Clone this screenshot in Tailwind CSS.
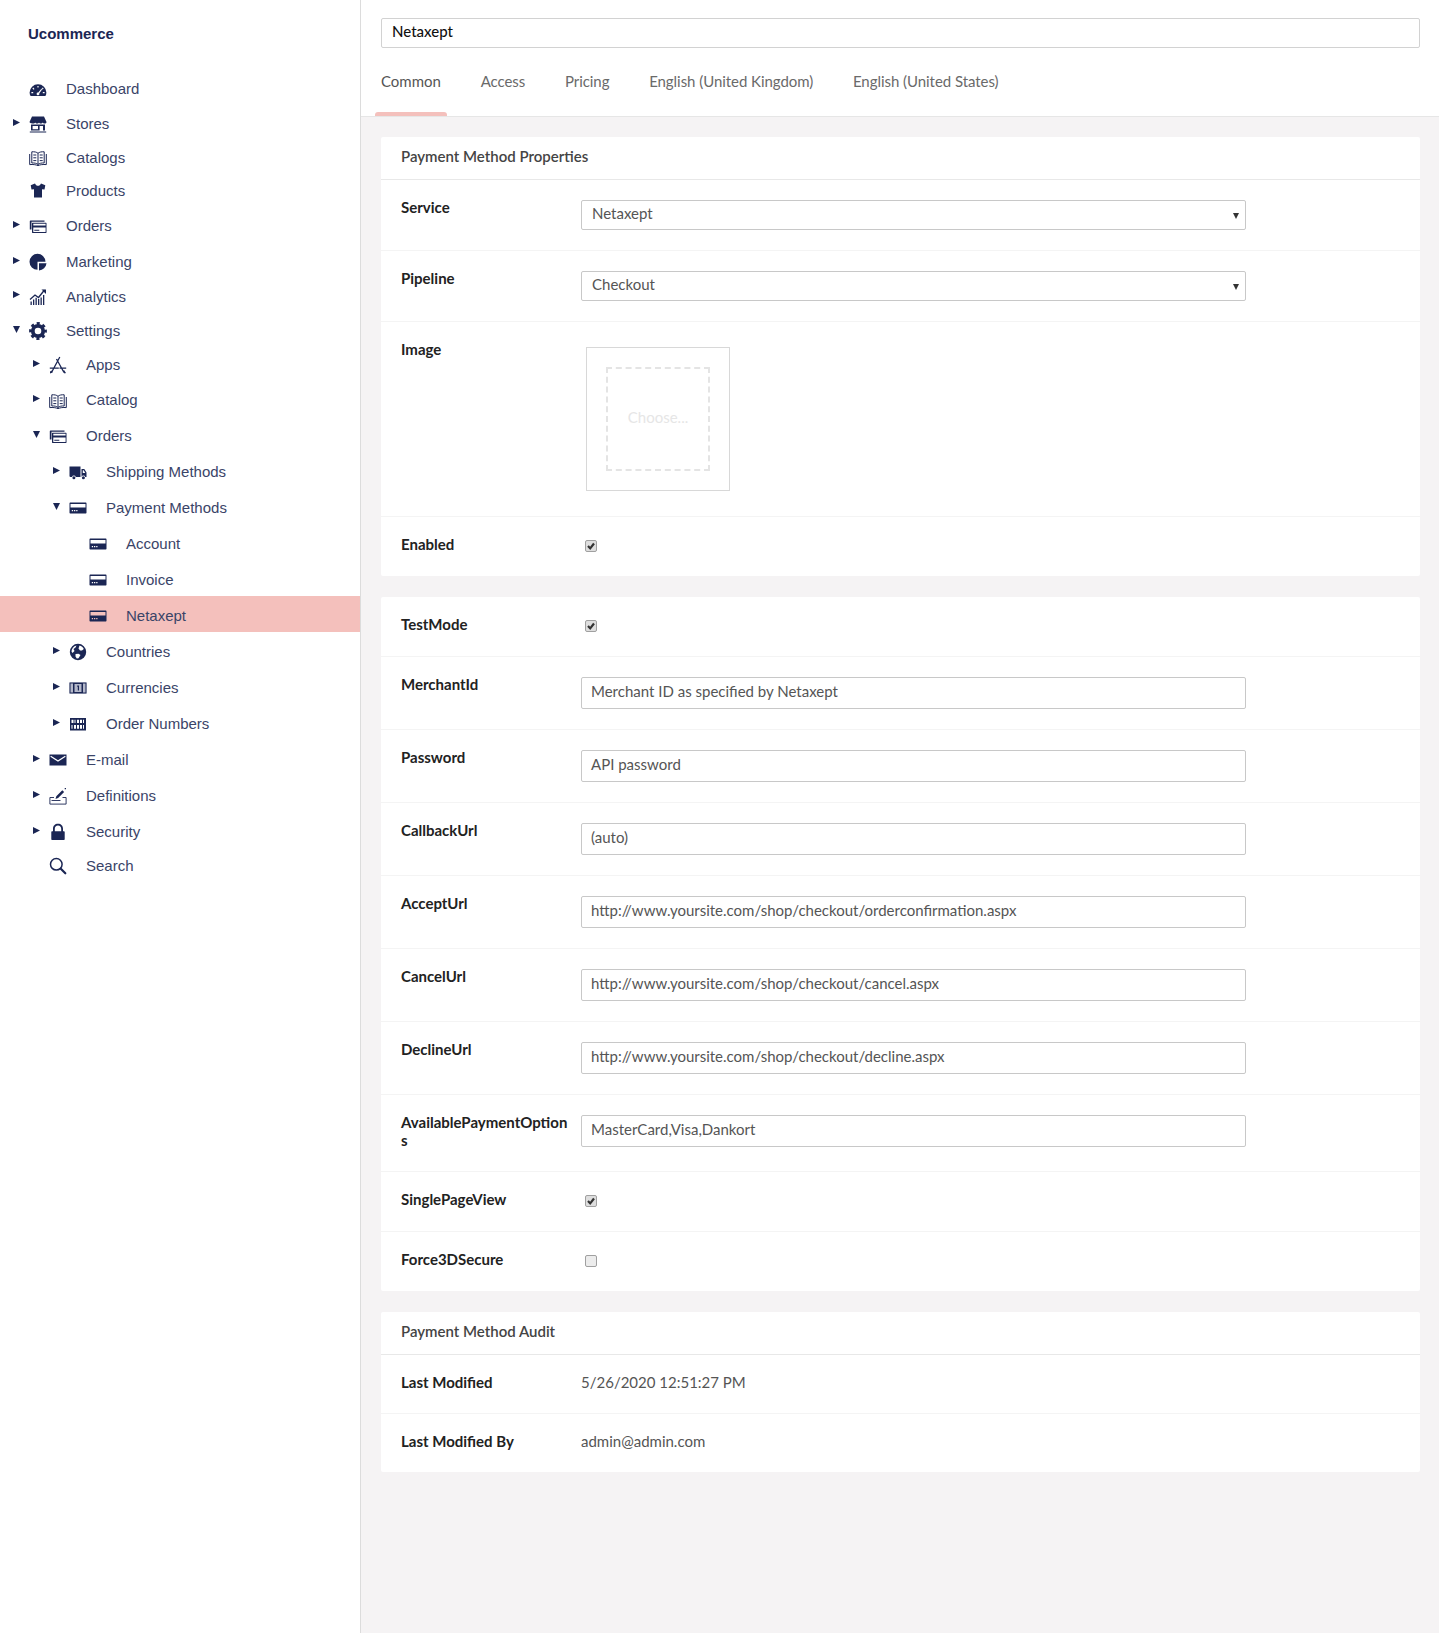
<!DOCTYPE html>
<html lang="en">
<head>
<meta charset="utf-8">
<title>Ucommerce</title>
<script src="https://cdn.jsdelivr.net/npm/@tailwindcss/browser@4"></script>
</head>
<body class="bg-white">
<div class="flex min-h-[1633px] w-[1439px]">
  <!-- Sidebar -->
  <aside class="w-[361px] shrink-0 border-r border-[#dcdcdc] bg-white font-['Liberation_Sans',Arial,sans-serif] text-[15px] text-[#3a4468]">
    <div class="flex h-[68px] items-center pl-[28px] font-bold text-[#1b2654]">Ucommerce</div>
    <nav class="mt-[2px]">
      <a class="flex h-[35px] items-center pl-[29px] pt-[4px]"><svg class="mr-[19px] h-[18px] w-[18px] text-[#1b2654]" viewBox="0 0 18 18"><path fill="currentColor" fill-rule="evenodd" d="M9 3.200a8.400 8.400 0 0 0-8.400 8.400c0 1.400.4 2.500 1 3.400h14.800c.6-.9 1-2 1-3.400A8.400 8.400 0 0 0 9 3.200zM8.400 5h1.200v1.600H8.400zM4.200 6.600l1.300 1.300-.8.8-1.300-1.300zm9.600 0 .8.8-1.300 1.300-.8-.8zM2.400 11h1.800v1.200H2.400zm11.400 0h1.800v1.200h-1.800zm-1.200-3.600.9.7-3.200 4.200a1.400 1.400 0 1 1-1-.8z"/></svg>Dashboard</a>
      <a class="flex h-[34px] items-center pl-[13px] pt-[4px]"><svg class="mr-[9px] h-[7px] w-[7px] -translate-y-[2px] text-[#1b2654]" viewBox="0 0 7 7"><path fill="currentColor" d="M0 0l7 3.500L0 7z"/></svg><svg class="mr-[19px] h-[18px] w-[18px] text-[#1b2654]" viewBox="0 0 18 18"><path fill="currentColor" fill-rule="evenodd" d="M3 1.500h12l2.500 5.500c0 1-1 1.600-1.900 1.600s-1.600-.5-1.900-1.100c-.3.6-1 1.100-1.900 1.100s-1.500-.5-1.800-1.100c-.3.6-1 1.100-1.900 1.100s-1.600-.5-1.900-1.100c-.3.6-1 1.100-1.900 1.100S.5 8 .5 7zM2 9.600h14v6H2zM3.600 11v3.200h5.400V11zm7 0v4.600H14V11zM.8 16.600h16.400v1H.8z"/></svg>Stores</a>
      <a class="flex h-[34px] items-center pl-[29px] pt-[4px]"><svg class="mr-[19px] h-[18px] w-[18px] text-[#1b2654]" viewBox="0 0 18 18"><path fill="none" stroke="currentColor" d="M9 4.300C7.600 3 5.400 2.600 2.800 2.800V14c2.600-.2 4.800.2 6.200 1.500 1.400-1.300 3.600-1.700 6.200-1.500V2.800c-2.600-.2-4.800.2-6.200 1.500zm0 0v11.200M.7 5v10.600c3.300-.3 6 0 8.300 1 2.300-1 5-1.300 8.300-1V5M4.300 6h3M4.300 8.800h3M4.300 11.600h3M10.700 6h3M10.700 8.800h3M10.700 11.600h3"/></svg>Catalogs</a>
      <a class="flex h-[33px] items-center pl-[29px] pt-[4px]"><svg class="mr-[19px] -mt-[3px] h-[18px] w-[18px] text-[#1b2654]" viewBox="0 0 18 18"><path fill="currentColor" d="M6 2.500 1.700 4.300 2.500 8.400 5 8.200V16.500H13V8.200L15.500 8.400 16.300 4.300 12 2.500C11.300 4.200 10.300 4.800 9 4.800S6.700 4.200 6 2.500z"/></svg>Products</a>
      <a class="flex h-[36.500px] items-center pl-[13px] pt-[4px]"><svg class="mr-[9px] h-[7px] w-[7px] -translate-y-[2px] text-[#1b2654]" viewBox="0 0 7 7"><path fill="currentColor" d="M0 0l7 3.500L0 7z"/></svg><svg class="mr-[19px] h-[18px] w-[18px] text-[#1b2654]" viewBox="0 0 18 18"><path fill="currentColor" fill-rule="evenodd" d="M1.500 3.500h14v1.200h-13v7.800H.8V4.200c0-.4.300-.7.700-.7zM3.500 5.700H17c.3 0 .5.200.5.500v9.300c0 .3-.2.500-.5.500H3.500c-.3 0-.5-.2-.5-.5V6.200c0-.3.200-.5.500-.5zm.8 1v1.800h12.300V6.700zm0 3.700v4.700h12.300v-4.700zm1 2.300h5v1h-5z"/></svg>Orders</a>
      <a class="flex h-[35px] items-center pl-[13px] pt-[4px]"><svg class="mr-[9px] h-[7px] w-[7px] -translate-y-[2px] text-[#1b2654]" viewBox="0 0 7 7"><path fill="currentColor" d="M0 0l7 3.500L0 7z"/></svg><svg class="mr-[19px] h-[18px] w-[18px] text-[#1b2654]" viewBox="0 0 18 18"><path fill="currentColor" d="M8.500.8A8 8 0 0 0 8.500 16.800V8.800H16.500A8 8 0 0 0 8.500.8zM10 10.300H17.500A8 8 0 0 1 10 17.500z"/></svg>Marketing</a>
      <a class="flex h-[34.500px] items-center pl-[13px] pt-[4px]"><svg class="mr-[9px] h-[7px] w-[7px] -translate-y-[2px] text-[#1b2654]" viewBox="0 0 7 7"><path fill="currentColor" d="M0 0l7 3.500L0 7z"/></svg><svg class="mr-[19px] h-[18px] w-[18px] text-[#1b2654]" viewBox="0 0 18 18"><path fill="currentColor" d="M1.500 13.500h1.300V17H1.500zM4 11.500h1.300V17H4zM6.500 9.800h1.300V17H6.500zM9 11h1.300v6H9zM11.500 9.500h1.300V17h-1.300zM14 7h1.300v10H14z"/><path fill="none" stroke="currentColor" stroke-width="1.300" d="M1 11.500 6 7l3.500 2.500L15.500 2"/><path fill="currentColor" d="M12.500 1.500H17V6z"/></svg>Analytics</a>
      <a class="flex h-[34px] items-center pl-[13px] pt-[4px]"><svg class="mr-[9px] h-[7px] w-[7px] -translate-y-[2px] text-[#1b2654]" viewBox="0 0 7 7"><path fill="currentColor" d="M0 0h7L3.500 7z"/></svg><svg class="mr-[19px] h-[18px] w-[18px] text-[#1b2654]" viewBox="0 0 18 18"><circle cx="9" cy="9" r="5.200" fill="none" stroke="currentColor" stroke-width="3.800"/><circle cx="9" cy="9" r="7.400" fill="none" stroke="currentColor" stroke-width="3" stroke-dasharray="3 2.810" stroke-dashoffset="1.500"/></svg>Settings</a>
      <a class="flex h-[35px] items-center pl-[33px] pt-[4px]"><svg class="mr-[9px] h-[7px] w-[7px] -translate-y-[2px] text-[#1b2654]" viewBox="0 0 7 7"><path fill="currentColor" d="M0 0l7 3.500L0 7z"/></svg><svg class="mr-[19px] -mt-[2px] h-[18px] w-[18px] text-[#1b2654]" viewBox="0 0 18 18"><path fill="none" stroke="currentColor" stroke-width="1.300" d="M10.800 1 2.500 16.500M7.500 3l7.500 13.500M.8 12.200h9M10.500 12.200h6.700"/><path fill="currentColor" d="M1 15.500l2-1 .5 2-2.500 1zM15 14l2 3-1.500.5-1.500-2.500z"/></svg>Apps</a>
      <a class="flex h-[35px] items-center pl-[33px] pt-[4px]"><svg class="mr-[9px] h-[7px] w-[7px] -translate-y-[2px] text-[#1b2654]" viewBox="0 0 7 7"><path fill="currentColor" d="M0 0l7 3.500L0 7z"/></svg><svg class="mr-[19px] h-[18px] w-[18px] text-[#1b2654]" viewBox="0 0 18 18"><path fill="none" stroke="currentColor" d="M9 4.300C7.600 3 5.400 2.600 2.800 2.800V14c2.600-.2 4.800.2 6.200 1.500 1.400-1.300 3.600-1.700 6.200-1.500V2.800c-2.600-.2-4.800.2-6.200 1.500zm0 0v11.200M.7 5v10.600c3.300-.3 6 0 8.300 1 2.300-1 5-1.300 8.300-1V5M4.300 6h3M4.300 8.800h3M4.300 11.600h3M10.700 6h3M10.700 8.800h3M10.700 11.600h3"/></svg>Catalog</a>
      <a class="flex h-[36px] items-center pl-[33px] pt-[4px]"><svg class="mr-[9px] h-[7px] w-[7px] -translate-y-[2px] text-[#1b2654]" viewBox="0 0 7 7"><path fill="currentColor" d="M0 0h7L3.500 7z"/></svg><svg class="mr-[19px] h-[18px] w-[18px] text-[#1b2654]" viewBox="0 0 18 18"><path fill="currentColor" fill-rule="evenodd" d="M1.500 3.500h14v1.200h-13v7.800H.8V4.200c0-.4.300-.7.700-.7zM3.500 5.700H17c.3 0 .5.200.5.500v9.300c0 .3-.2.500-.5.500H3.500c-.3 0-.5-.2-.5-.5V6.200c0-.3.200-.5.500-.5zm.8 1v1.800h12.300V6.700zm0 3.700v4.700h12.300v-4.700zm1 2.300h5v1h-5z"/></svg>Orders</a>
      <a class="flex h-[36px] items-center pl-[53px] pt-[4px]"><svg class="mr-[9px] h-[7px] w-[7px] -translate-y-[2px] text-[#1b2654]" viewBox="0 0 7 7"><path fill="currentColor" d="M0 0l7 3.500L0 7z"/></svg><svg class="mr-[19px] h-[18px] w-[18px] text-[#1b2654]" viewBox="0 0 18 18"><path fill="currentColor" fill-rule="evenodd" d="M.5 3.500h11V14H6.800a2 2 0 0 0-3.800 0H1.500A1 1 0 0 1 .5 13zM12.500 6h2.800l2.200 3.500V14h-1.200a2 2 0 0 0-3.800 0zm1.300 1.200V10h2.500l-1.600-2.800z"/><circle cx="4.900" cy="14.800" r="1.500" fill="currentColor"/><circle cx="14.400" cy="14.800" r="1.500" fill="currentColor"/></svg>Shipping Methods</a>
      <a class="flex h-[36px] items-center pl-[53px] pt-[4px]"><svg class="mr-[9px] h-[7px] w-[7px] -translate-y-[2px] text-[#1b2654]" viewBox="0 0 7 7"><path fill="currentColor" d="M0 0h7L3.500 7z"/></svg><svg class="mr-[19px] h-[18px] w-[18px] text-[#1b2654]" viewBox="0 0 18 18"><path fill="currentColor" fill-rule="evenodd" d="M1.200 3.500h15.600c.4 0 .7.300.7.700v9.600c0 .4-.3.700-.7.700H1.200c-.4 0-.7-.3-.7-.7V4.200c0-.4.300-.7.700-.7zM1.500 5v3.500h15V5zM2.800 11v1.300h1.300V11zm2.200 0v1.300h1.300V11zm2.200 0v1.300h1.300V11z"/></svg>Payment Methods</a>
      <a class="flex h-[36px] items-center pl-[89px] pt-[4px]"><svg class="mr-[19px] h-[18px] w-[18px] text-[#1b2654]" viewBox="0 0 18 18"><path fill="currentColor" fill-rule="evenodd" d="M1.200 3.500h15.600c.4 0 .7.300.7.700v9.600c0 .4-.3.700-.7.700H1.200c-.4 0-.7-.3-.7-.7V4.200c0-.4.300-.7.700-.7zM1.500 5v3.500h15V5zM2.800 11v1.300h1.300V11zm2.200 0v1.300h1.300V11zm2.200 0v1.300h1.300V11z"/></svg>Account</a>
      <a class="flex h-[36px] items-center pl-[89px] pt-[4px]"><svg class="mr-[19px] h-[18px] w-[18px] text-[#1b2654]" viewBox="0 0 18 18"><path fill="currentColor" fill-rule="evenodd" d="M1.200 3.500h15.600c.4 0 .7.300.7.700v9.600c0 .4-.3.700-.7.700H1.200c-.4 0-.7-.3-.7-.7V4.200c0-.4.300-.7.700-.7zM1.500 5v3.500h15V5zM2.800 11v1.300h1.300V11zm2.200 0v1.300h1.300V11zm2.200 0v1.300h1.300V11z"/></svg>Invoice</a>
      <a class="flex h-[36px] items-center bg-[#f4c0bc] pl-[89px] pt-[4px]"><svg class="mr-[19px] h-[18px] w-[18px] text-[#1b2654]" viewBox="0 0 18 18"><path fill="currentColor" fill-rule="evenodd" d="M1.200 3.500h15.600c.4 0 .7.300.7.700v9.600c0 .4-.3.700-.7.700H1.200c-.4 0-.7-.3-.7-.7V4.200c0-.4.300-.7.700-.7zM1.500 5v3.500h15V5zM2.800 11v1.300h1.300V11zm2.200 0v1.300h1.300V11zm2.200 0v1.300h1.300V11z"/></svg>Netaxept</a>
      <a class="flex h-[36px] items-center pl-[53px] pt-[4px]"><svg class="mr-[9px] h-[7px] w-[7px] -translate-y-[2px] text-[#1b2654]" viewBox="0 0 7 7"><path fill="currentColor" d="M0 0l7 3.500L0 7z"/></svg><svg class="mr-[19px] h-[18px] w-[18px] text-[#1b2654]" viewBox="0 0 18 18"><path fill="currentColor" fill-rule="evenodd" d="M9 .8a8.200 8.200 0 1 0 0 16.400A8.200 8.200 0 0 0 9 .8zM7.500 2.500 6.500 4.500 4.500 6 5.500 8 3.500 10 2.500 8.500C2.600 5.800 4.600 3.200 7.500 2.500zM10.500 2.500C12.500 3 14 4.300 14.800 6L13 7.500 11 7.500 9.500 5.500zM6.500 11 9.500 10.800 11.500 12 9.500 15.300 7.800 15.500 6.500 13.500z"/></svg>Countries</a>
      <a class="flex h-[36px] items-center pl-[53px] pt-[4px]"><svg class="mr-[9px] h-[7px] w-[7px] -translate-y-[2px] text-[#1b2654]" viewBox="0 0 7 7"><path fill="currentColor" d="M0 0l7 3.500L0 7z"/></svg><svg class="mr-[19px] h-[18px] w-[18px] text-[#1b2654]" viewBox="0 0 18 18"><rect x=".5" y="3.500" width="17" height="11" fill="#b4b8ca"/><path fill="currentColor" fill-rule="evenodd" d="M4 3.500h10v11H4zM5.500 5v8h7V5zM8.200 6.500h1.800v5H8.800V7.700h-.6zM.5 3.500H4v1H1.500v9H4v1H.5zM14 3.500h3.500v11H14v-1h2.500v-9H14z"/></svg>Currencies</a>
      <a class="flex h-[36px] items-center pl-[53px] pt-[4px]"><svg class="mr-[9px] h-[7px] w-[7px] -translate-y-[2px] text-[#1b2654]" viewBox="0 0 7 7"><path fill="currentColor" d="M0 0l7 3.500L0 7z"/></svg><svg class="mr-[19px] h-[18px] w-[18px] text-[#1b2654]" viewBox="0 0 18 18"><path fill="currentColor" fill-rule="evenodd" d="M1 3h16v12.500H1zM2.500 4.800v3.200h2V4.800zm3 0v3.200h1V4.800zm2.500 0v3.200h2V4.800zm3 0v3.200h2V4.800zm3 0v3.200h1V4.800zM2.500 10v3.700h1V10zm2.500 0v3.700h2V10zm3 0v3.700h2V10zm3 0v3.700h2V10zm3 0v3.700h1V10z"/></svg>Order Numbers</a>
      <a class="flex h-[36px] items-center pl-[33px] pt-[4px]"><svg class="mr-[9px] h-[7px] w-[7px] -translate-y-[2px] text-[#1b2654]" viewBox="0 0 7 7"><path fill="currentColor" d="M0 0l7 3.500L0 7z"/></svg><svg class="mr-[19px] h-[18px] w-[18px] text-[#1b2654]" viewBox="0 0 18 18"><path fill="currentColor" fill-rule="evenodd" d="M.5 3.500h17v11H.5zM2 4.800l-.7 1 7.700 5 7.700-5-.7-1-7 4.500z"/></svg>E-mail</a>
      <a class="flex h-[36px] items-center pl-[33px] pt-[4px]"><svg class="mr-[9px] h-[7px] w-[7px] -translate-y-[2px] text-[#1b2654]" viewBox="0 0 7 7"><path fill="currentColor" d="M0 0l7 3.500L0 7z"/></svg><svg class="mr-[19px] h-[18px] w-[18px] text-[#1b2654]" viewBox="0 0 18 18"><path fill="none" stroke="currentColor" stroke-width=".9" d="M5 10.500H.9v6.600h16.200v-6.600h-3.600M2.500 13.500h9"/><path fill="currentColor" d="M6.500 12l.8-2.800 6-6 1.800 1.800-6 6zM15.700 1h1.300v1.300h-1.300z"/></svg>Definitions</a>
      <a class="flex h-[36px] items-center pl-[33px] pt-[4px]"><svg class="mr-[9px] h-[7px] w-[7px] -translate-y-[2px] text-[#1b2654]" viewBox="0 0 7 7"><path fill="currentColor" d="M0 0l7 3.500L0 7z"/></svg><svg class="mr-[19px] h-[18px] w-[18px] text-[#1b2654]" viewBox="0 0 18 18"><path fill="currentColor" fill-rule="evenodd" d="M9 .8c-3 0-5 2-5 5v2.500H3c-.4 0-.7.3-.7.7v7.300c0 .4.300.7.700.7h12c.4 0 .7-.3.700-.7V9c0-.4-.3-.7-.7-.7h-1V5.800c0-3-2-5-5-5zm0 1.700c2 0 3.200 1.300 3.200 3.300v2.500H5.800V5.800c0-2 1.200-3.300 3.200-3.300z"/></svg>Security</a>
      <a class="flex h-[33px] items-center pl-[49px] pt-[4px]"><svg class="mr-[19px] -mt-[2px] h-[18px] w-[18px] text-[#1b2654]" viewBox="0 0 18 18"><circle cx="7.300" cy="7.300" r="5.800" fill="none" stroke="currentColor" stroke-width="1.500"/><path fill="none" stroke="currentColor" stroke-width="2.200" stroke-linecap="round" d="M11.800 11.800 16.300 16.300"/></svg>Search</a>
    </nav>
  </aside>

  <!-- Main -->
  <main class="flex-1 bg-[#f5f3f4] font-['Lato',sans-serif] text-[15px] text-[#555]">
    <header class="h-[117px] border-b border-[#e6e6e6] bg-white pl-[20px] pr-[19px] pt-[18px]">
      <div class="flex h-[30px] items-center rounded-[2px] border border-[#d2d2d2] pb-[4px] pl-[10px] font-medium text-[#111]">Netaxept</div>
      <div class="mt-[21px] flex gap-[39.7px] tracking-[-0.05px] text-[#6a6a6a]">
        <div class="relative h-[47px] leading-[24px] tracking-normal text-[#555]">Common<span class="absolute -left-[6px] -right-[6px] bottom-0 h-[4px] rounded-t-[3px] bg-[#f4c0bc]"></span></div>
        <div class="h-[47px] leading-[24px]">Access</div>
        <div class="h-[47px] leading-[24px]">Pricing</div>
        <div class="h-[47px] leading-[24px]">English (United Kingdom)</div>
        <div class="h-[47px] leading-[24px]">English (United States)</div>
      </div>
    </header>

    <div class="flex flex-col gap-[21px] pb-[20px] pl-[20px] pr-[19px] pt-[20px]">
      <section class="rounded-[2px] bg-white">
        <h2 class="flex h-[43px] items-center border-b border-[#e8e8e8] px-[20px] pb-[3px] font-semibold text-[#444]">Payment Method Properties</h2>
        <div class="flex border-b border-[#f4f4f4] p-[20px]">
          <div class="w-[180px] shrink-0 break-all leading-[14px] font-bold text-[#222]">Service</div>
          <div class="relative flex h-[30px] w-[665px] items-center rounded-[2px] border border-[#c8c8c8] pb-[4px] pl-[10px]">Netaxept<svg class="absolute right-[6px] top-[12px] h-[6px] w-[6px] text-[#333]" viewBox="0 0 6 6"><path fill="currentColor" d="M0 0h6L3 6z"/></svg></div>
        </div>
        <div class="flex border-b border-[#f4f4f4] p-[20px]">
          <div class="w-[180px] shrink-0 break-all leading-[14px] font-bold text-[#222]">Pipeline</div>
          <div class="relative flex h-[30px] w-[665px] items-center rounded-[2px] border border-[#c8c8c8] pb-[4px] pl-[10px]">Checkout<svg class="absolute right-[6px] top-[12px] h-[6px] w-[6px] text-[#333]" viewBox="0 0 6 6"><path fill="currentColor" d="M0 0h6L3 6z"/></svg></div>
        </div>
        <div class="flex border-b border-[#f4f4f4] px-[20px] pb-[25px] pt-[20px]">
          <div class="w-[180px] shrink-0 break-all leading-[14px] font-bold text-[#222]">Image</div>
          <div class="ml-[5px] mt-[5px] h-[144px] w-[144px] border border-[#d8d8d8] p-[19px]">
            <div class="flex h-[104px] w-[104px] items-center justify-center border-2 border-dashed border-[#e4e4e4] pb-[4px] text-[#e6e6e6]">Choose...</div>
          </div>
        </div>
        <div class="flex h-[59px] px-[20px] pt-[20px]">
          <div class="w-[180px] shrink-0 break-all leading-[14px] font-bold text-[#222]">Enabled</div>
          <span class="ml-[4px] mt-[3px] flex h-[12px] w-[12px] items-center justify-center rounded-[2px] border border-[#a0a0a0] bg-[#dedede]"><svg class="h-[10px] w-[10px] text-[#333]" viewBox="0 0 10 10"><path fill="none" stroke="currentColor" stroke-width="2.200" d="M2 5l2.200 2.400L8 2.500"/></svg></span>
        </div>
      </section>

      <section class="rounded-[2px] bg-white">
        <div class="flex h-[60px] border-b border-[#f4f4f4] px-[20px] pt-[20px]">
          <div class="w-[180px] shrink-0 break-all leading-[14px] font-bold text-[#222]">TestMode</div>
          <span class="ml-[4px] mt-[3px] flex h-[12px] w-[12px] items-center justify-center rounded-[2px] border border-[#a0a0a0] bg-[#dedede]"><svg class="h-[10px] w-[10px] text-[#333]" viewBox="0 0 10 10"><path fill="none" stroke="currentColor" stroke-width="2.200" d="M2 5l2.200 2.400L8 2.500"/></svg></span>
        </div>
        <div class="flex border-b border-[#f4f4f4] p-[20px]">
          <div class="w-[180px] shrink-0 break-all leading-[14px] font-bold text-[#222]">MerchantId</div>
          <div class="flex h-[32px] w-[665px] items-center rounded-[2px] border border-[#c8c8c8] pb-[4px] pl-[9px]">Merchant ID as specified by Netaxept</div>
        </div>
        <div class="flex border-b border-[#f4f4f4] p-[20px]">
          <div class="w-[180px] shrink-0 break-all leading-[14px] font-bold text-[#222]">Password</div>
          <div class="flex h-[32px] w-[665px] items-center rounded-[2px] border border-[#c8c8c8] pb-[4px] pl-[9px]">API password</div>
        </div>
        <div class="flex border-b border-[#f4f4f4] p-[20px]">
          <div class="w-[180px] shrink-0 break-all leading-[14px] font-bold text-[#222]">CallbackUrl</div>
          <div class="flex h-[32px] w-[665px] items-center rounded-[2px] border border-[#c8c8c8] pb-[4px] pl-[9px]">(auto)</div>
        </div>
        <div class="flex border-b border-[#f4f4f4] p-[20px]">
          <div class="w-[180px] shrink-0 break-all leading-[14px] font-bold text-[#222]">AcceptUrl</div>
          <div class="flex h-[32px] w-[665px] items-center rounded-[2px] border border-[#c8c8c8] pb-[4px] pl-[9px]">http://www.yoursite.com/shop/checkout/orderconfirmation.aspx</div>
        </div>
        <div class="flex border-b border-[#f4f4f4] p-[20px]">
          <div class="w-[180px] shrink-0 break-all leading-[14px] font-bold text-[#222]">CancelUrl</div>
          <div class="flex h-[32px] w-[665px] items-center rounded-[2px] border border-[#c8c8c8] pb-[4px] pl-[9px]">http://www.yoursite.com/shop/checkout/cancel.aspx</div>
        </div>
        <div class="flex border-b border-[#f4f4f4] p-[20px]">
          <div class="w-[180px] shrink-0 break-all leading-[14px] font-bold text-[#222]">DeclineUrl</div>
          <div class="flex h-[32px] w-[665px] items-center rounded-[2px] border border-[#c8c8c8] pb-[4px] pl-[9px]">http://www.yoursite.com/shop/checkout/decline.aspx</div>
        </div>
        <div class="flex border-b border-[#f4f4f4] px-[20px] pb-[20px] pt-[20px]">
          <div class="-mt-[2px] mb-[2px] w-[180px] shrink-0 break-all pr-[10px] leading-[18px] font-bold text-[#222]">AvailablePaymentOptions</div>
          <div class="flex h-[32px] w-[665px] items-center rounded-[2px] border border-[#c8c8c8] pb-[4px] pl-[9px]">MasterCard,Visa,Dankort</div>
        </div>
        <div class="flex h-[60px] border-b border-[#f4f4f4] px-[20px] pt-[20px]">
          <div class="w-[180px] shrink-0 break-all leading-[14px] font-bold text-[#222]">SinglePageView</div>
          <span class="ml-[4px] mt-[3px] flex h-[12px] w-[12px] items-center justify-center rounded-[2px] border border-[#a0a0a0] bg-[#dedede]"><svg class="h-[10px] w-[10px] text-[#333]" viewBox="0 0 10 10"><path fill="none" stroke="currentColor" stroke-width="2.200" d="M2 5l2.200 2.400L8 2.500"/></svg></span>
        </div>
        <div class="flex h-[59px] px-[20px] pt-[20px]">
          <div class="w-[180px] shrink-0 break-all leading-[14px] font-bold text-[#222]">Force3DSecure</div>
          <span class="ml-[4px] mt-[3px] h-[12px] w-[12px] rounded-[2px] border border-[#a0a0a0] bg-[#ececec]"></span>
        </div>
      </section>

      <section class="rounded-[2px] bg-white">
        <h2 class="flex h-[43px] items-center border-b border-[#e8e8e8] px-[20px] pb-[3px] font-semibold text-[#444]">Payment Method Audit</h2>
        <div class="flex h-[59px] border-b border-[#f4f4f4] px-[20px] pt-[20px]">
          <div class="w-[180px] shrink-0 leading-[14px] font-bold text-[#222]">Last Modified</div>
          <div class="leading-[14px]">5/26/2020 12:51:27 PM</div>
        </div>
        <div class="flex h-[58px] px-[20px] pt-[20px]">
          <div class="w-[180px] shrink-0 leading-[14px] font-bold text-[#222]">Last Modified By</div>
          <div class="leading-[14px]">admin@admin.com</div>
        </div>
      </section>
    </div>
  </main>
</div>
</body>
</html>
